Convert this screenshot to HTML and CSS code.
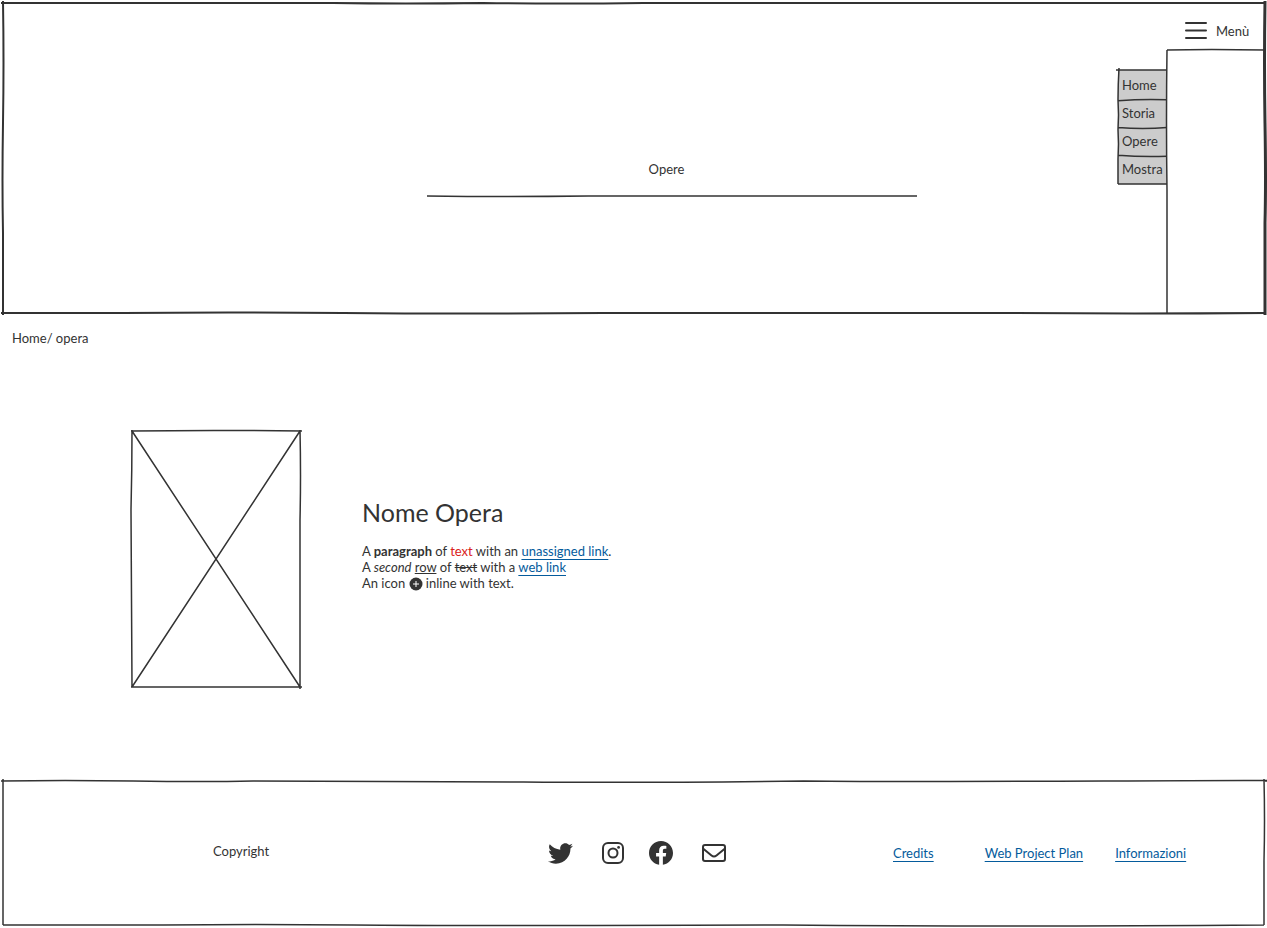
FILE: index.html
```html
<!DOCTYPE html>
<html lang="it">
<head>
<meta charset="utf-8">
<meta name="viewport" content="width=device-width, initial-scale=1">
<title>Opere</title>
<link rel="stylesheet" href="styles.css">
</head>
<body>
<header class="hero">
  <svg class="sketch sketch-heavy" viewBox="0 0 1260 310" preserveAspectRatio="none" aria-hidden="true">
    <path d="M-2 0H330Q400 1 480 0Q560 1 640 0H1000L1262 0"/>
    <path d="M0-2Q1 60 0 120T0 230V312"/>
    <path d="M-2 310H120Q220 309 340 310T600 310H1000Q1130 311 1262 310"/>
    <path class="thick" d="M1261-2Q1260 60 1261 120T1261 220V312"/>
  </svg>
  <div class="hero-title">
    <h1>Opere</h1>
    <svg class="rule" viewBox="0 0 486 4" preserveAspectRatio="none" aria-hidden="true"><path d="M0 2Q80 3 160 2L486 2"/></svg>
  </div>
  <nav class="menu-list" id="menu" aria-label="Menù">
    <svg class="sketch" viewBox="0 0 49 115" preserveAspectRatio="none" aria-hidden="true">
      <path d="M-2 0H49M1-2Q0 15 0 30Q1 45 0 60Q1 75 0 90V115M0 31Q25 29 49 30M0 58Q25 60 49 58M0 86Q25 88 49 87M0 115H49"/>
    </svg>
    <a href="#home">Home</a>
    <a href="#storia">Storia</a>
    <a href="#opere">Opere</a>
    <a href="#mostra">Mostra</a>
  </nav>
  <div class="menu-column">
    <button class="menu-button" type="button" aria-controls="menu">
      <svg class="burger" viewBox="0 0 22 18" aria-hidden="true"><path d="M1 1H21M1 8.500H21M1 16H21"/></svg>
      Menù
    </button>
    <div class="menu-panel">
      <svg class="sketch" viewBox="0 0 97 263" preserveAspectRatio="none" aria-hidden="true"><path d="M0 0Q40-1 99 0M0 0Q-1 70 0 140V263"/></svg>
    </div>
  </div>
</header>
<main>
  <nav class="breadcrumb" aria-label="Breadcrumb">Home/ opera</nav>
  <article class="work">
    <svg class="picture" viewBox="0 0 170 258" role="img" aria-label="Opera">
      <path d="M0 1Q80 0 171 1M1 0Q1 40 0 80L1 257M169 0Q170 45 169 90V259M0 257H171M1 1L169 257M169 1L1 257"/>
    </svg>
    <div class="description">
      <h2>Nome Opera</h2>
      <p>A <strong>paragraph</strong> of <span class="red">text</span> with an <a href="#link">unassigned link</a>.<br>
      A <em>second</em> <u>row</u> of <s>text</s> with a <a href="#web">web link</a><br>
      An icon <svg class="plus" viewBox="0 0 14 14" aria-hidden="true"><circle cx="7" cy="7" r="6.500"/><path d="M7 4V10M4 7H10"/></svg> inline with text.</p>
    </div>
  </article>
</main>
<footer class="footer">
  <svg class="sketch" viewBox="0 0 1260 144" preserveAspectRatio="none" aria-hidden="true">
    <path d="M-2 0Q60-1 130 0T250 0Q400 0 520 1T800 0Q900 1 1100 0T1261 0M0-2V144M0 144H160Q250 143 350 144T780 144Q1000 146 1260 144M1260-2Q1261 40 1260 80V144"/>
  </svg>
  <p class="copyright">Copyright</p>
  <div class="social">
    <a href="#twitter" aria-label="Twitter"><svg width="25" height="25" viewBox="0 0 512 512"><path d="M459.370 151.716c.325 4.548.325 9.097.325 13.645 0 138.720-105.583 298.558-298.558 298.558-59.452 0-114.680-17.219-161.137-47.106 8.447.974 16.568 1.299 25.340 1.299 49.055 0 94.213-16.568 130.274-44.832-46.132-.975-84.792-31.188-98.112-72.772 6.498.974 12.995 1.624 19.818 1.624 9.421 0 18.843-1.300 27.614-3.573-48.081-9.747-84.143-51.980-84.143-102.985v-1.299c13.969 7.797 30.214 12.670 47.431 13.319-28.264-18.843-46.781-51.005-46.781-87.391 0-19.492 5.197-37.360 14.294-52.954 51.655 63.675 129.300 105.258 216.365 109.807-1.624-7.797-2.599-15.918-2.599-24.040 0-57.828 46.782-104.934 104.934-104.934 30.213 0 57.502 12.670 76.670 33.137 23.715-4.548 46.456-13.320 66.599-25.340-7.798 24.366-24.366 44.833-46.132 57.827 21.117-2.273 41.584-8.122 60.426-16.243-14.292 20.791-32.161 39.308-52.628 54.253z"/></svg></a>
    <a href="#instagram" aria-label="Instagram"><svg class="outline" width="22" height="22" viewBox="0 0 22 22"><rect x="1" y="1" width="20" height="20" rx="5"/><circle cx="11" cy="11" r="4.500"/><circle class="dot" cx="16.600" cy="5.400" r="1.400"/></svg></a>
    <a class="facebook" href="#facebook" aria-label="Facebook"><svg width="24" height="24" viewBox="8 8 496 496"><path d="M504 256C504 119 393 8 256 8S8 119 8 256c0 123.780 90.690 226.380 209.250 245V327.690h-63V256h63v-54.640c0-62.150 37-96.480 93.670-96.480 27.140 0 55.520 4.840 55.520 4.840v61h-31.280c-30.800 0-40.410 19.120-40.410 38.730V256h68.780l-11 71.690h-57.780V501C413.310 482.380 504 379.780 504 256z"/></svg></a>
    <a href="#mail" aria-label="Email"><svg class="outline" width="24" height="18" viewBox="0 0 24 18"><rect x="1" y="1" width="22" height="16" rx="2"/><path d="M1 4.500L9.500 11.500Q12 13.500 14.500 11.500L23 4.500"/></svg></a>
  </div>
  <nav class="links" aria-label="Link">
    <a href="#credits">Credits</a>
    <a href="#plan">Web Project Plan</a>
    <a href="#info">Informazioni</a>
  </nav>
</footer>
</body>
</html>
```
FILE: styles.css
```css
* { box-sizing: border-box; }
body {
  margin: 0;
  padding: 3px 3px 2px;
  background: #fff;
  color: #333;
  font: 13px/16px Lato, "Open Sans", sans-serif;
}
h1, h2, p { margin: 0; font-weight: 400; }
a { color: #045b9c; text-underline-offset: 3px; }

/* Hand-drawn outlines */
.sketch {
  position: absolute;
  inset: 0;
  width: 100%;
  height: 100%;
  overflow: visible;
  pointer-events: none;
}
.sketch path, .rule path, .picture path {
  fill: none;
  stroke: #333;
  stroke-width: 1.5;
  vector-effect: non-scaling-stroke;
}
.sketch-heavy path { stroke-width: 2; }
.sketch-heavy .thick { stroke-width: 3; }

.hero { position: relative; display: flex; min-height: 310px; }
.hero-title {
  flex: 1;
  display: flex;
  flex-direction: column;
  align-items: center;
  padding-top: 158px;
  padding-left: 224px;
}
.hero-title h1 { font-size: 13px; padding-right: 12px; }
.rule { width: 55%; height: 4px; margin-top: 17px; }

.menu-list {
  position: relative;
  align-self: flex-start;
  display: flex;
  flex-direction: column;
  width: 49px;
  margin-top: 67px;
  padding-bottom: 2px;
  background: #ccc;
}
.menu-list a {
  position: relative;
  padding: 7px 0 5px 4px;
  color: #333;
  text-decoration: none;
}
.menu-column { display: flex; flex-direction: column; width: 97px; }
.menu-button {
  display: flex;
  align-items: center;
  gap: 9px;
  height: 47px;
  padding: 9px 0 0 18px;
  border: 0;
  background: none;
  color: inherit;
  font: inherit;
}
.burger { width: 22px; height: 18px; overflow: visible; }
.burger path { fill: none; stroke: #333; stroke-width: 2; stroke-linecap: round; }
.menu-panel { position: relative; flex: 1; }

.breadcrumb { padding: 17px 9px 0; }
.work {
  display: flex;
  align-items: center;
  gap: 61px;
  padding: 84px 128px 93px;
}
.picture { flex: none; width: 170px; height: 258px; overflow: visible; }
.description h2 { font-size: 25px; line-height: 32px; margin-bottom: 15px; }
.description { padding-bottom: 32px; }
.red { color: #d9201a; }
.plus { width: 14px; height: 14px; vertical-align: -3px; }
.plus circle { fill: #333; }
.plus path { stroke: #fff; stroke-width: 1; }

.footer {
  position: relative;
  display: grid;
  grid-template-columns: 545fr 345fr 371fr;
  align-items: center;
  min-height: 144px;
}
.copyright { padding: 0 0 4px 210px; }
.social { display: flex; align-items: center; gap: 29px; }
.social a { display: flex; }
.social .facebook { margin-left: -4px; }
.social svg { fill: #333; }
.social .outline { fill: none; stroke: #333; stroke-width: 2; }
.social .dot { fill: #333; stroke: none; }
.links { display: flex; gap: 32px; }
.links a:first-child { margin-right: 19px; }
```
